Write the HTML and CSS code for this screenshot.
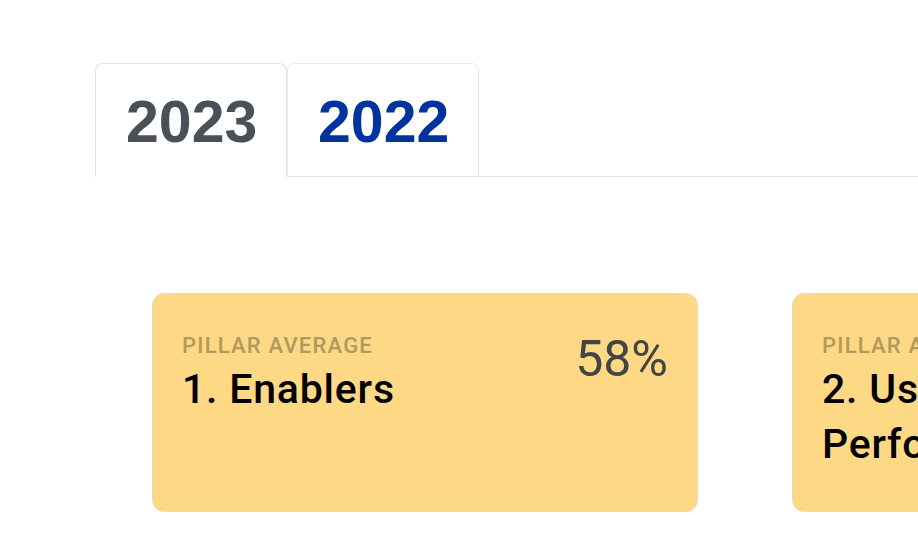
FILE: index.html
```html
<!DOCTYPE html>
<html lang="en">
<head>
<meta charset="utf-8">
<link rel="stylesheet" href="styles.css">
</head>
<body>
<div class="page">
  <ul class="tabs">
    <li class="tab active">2023</li>
    <li class="tab">2022</li>
  </ul>
  <div class="cards">
    <div class="card">
      <div class="card-text">
        <div class="label">PILLAR AVERAGE</div>
        <div class="title">1. Enablers</div>
      </div>
      <div class="pct">58%</div>
    </div>
    <div class="card">
      <div class="card-text">
        <div class="label">PILLAR AVERAGE</div>
        <div class="title">2. User Performance</div>
      </div>
      <div class="pct">61%</div>
    </div>
  </div>
</div>
</body>
</html>
```

FILE: styles.css
```css
html, body {
  margin: 0;
  padding: 0;
  background: #fff;
  overflow: hidden;
  font-family: Roboto, "Liberation Sans", sans-serif;
}
.page {
  width: 918px;
  height: 558px;
  overflow: hidden;
  padding: 63px 0 0 95px;
  box-sizing: border-box;
}
.tabs {
  list-style: none;
  margin: 0;
  padding: 0;
  display: flex;
  border-bottom: 1px solid #dee2e6;
  width: 900px;
}
.tab {
  font-family: "Liberation Sans", Arial, sans-serif;
  font-size: 59px;
  font-weight: 700;
  line-height: 72px;
  padding: 22px 30px 18px 30px;
  border: 1px solid #e9ecef;
  border-bottom-color: #dee2e6;
  border-radius: 8px 8px 0 0;
  margin-bottom: -1px;
  color: #0033a0;
  width: 130px;
  text-align: center;
}
.tab.active {
  color: #495057;
  border-color: #dee2e6 #dee2e6 #fff;
  background: #fff;
}
.cards {
  display: flex;
  gap: 94px;
  margin: 116px 0 0 57px;
}
.card {
  flex: 0 0 546px;
  box-sizing: border-box;
  height: 219px;
  background: #fdd885;
  border: 1px solid #e6dcc4;
  border-radius: 12px;
  padding: 35px 29px 0 29px;
  display: flex;
  justify-content: space-between;
  align-items: flex-start;
}
.card-text {
  max-width: 360px;
}
.label {
  font-size: 22px;
  line-height: 33px;
  font-weight: 500;
  color: #b09a5c;
  letter-spacing: 1.2px;
}
.title {
  font-size: 41px;
  line-height: 55px;
  font-weight: 500;
  color: #000;
  letter-spacing: 0.8px;
}
.pct {
  font-size: 50px;
  line-height: 60px;
  font-weight: 400;
  color: #444;
}
```
